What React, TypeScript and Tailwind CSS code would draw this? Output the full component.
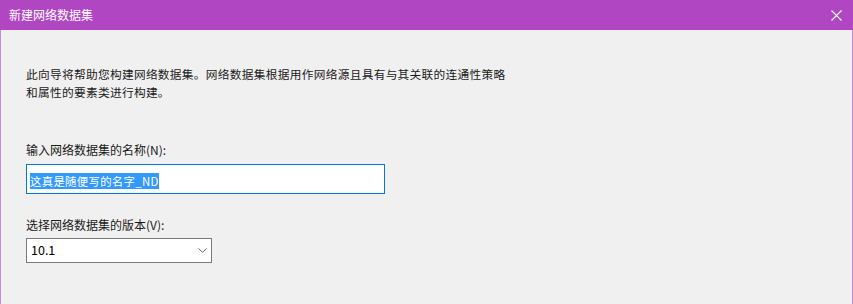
import { ChevronDown } from "lucide-react";

const font = "font-['Noto_Sans_CJK_SC','Noto_Sans',sans-serif]";

export default function App() {
	return (
		<div className={`flex h-[304px] w-[853px] flex-col overflow-hidden bg-[#f0f0f0] ${font}`}>
			{/* 标题栏 */}
			<div className="flex h-[30px] shrink-0 items-center justify-between bg-[#b046c2] pl-[9px] pr-[11px] text-white">
				<span className="text-[12px] leading-none">新建网络数据集</span>
				<svg width="11" height="11" viewBox="0 0 11 11" stroke="white" strokeWidth="1.1">
					<path d="M0.5 0.5 L10.5 10.5 M10.5 0.5 L0.5 10.5" />
				</svg>
			</div>

			<div className="flex flex-1 border-l border-r border-[#c48ad1] pr-[1px]">
				<div className="flex-1 pl-[25px]">
					{/* 说明 */}
					<p className="mt-[35px] text-[11.7px] leading-[18px] tracking-[0.3px] text-[#1a1a1a]">
						此向导将帮助您构建网络数据集。网络数据集根据用作网络源且具有与其关联的连通性策略
						<br />
						和属性的要素类进行构建。
					</p>

					{/* 名称 */}
					<label className="mt-[40px] block">
						<p className="text-[12px] leading-[18px] text-[#1a1a1a]">输入网络数据集的名称(N):</p>
						<div className="mt-[5px] h-[30px] w-[359px] border border-[#0078d7] bg-white pl-[3px] pt-[2px]">
							<span className="inline-block bg-[#3399ff] text-[11.4px] leading-[16px] tracking-[0.3px] text-white">
								这真是随便写的名字_ND
							</span>
						</div>
					</label>

					{/* 版本 */}
					<label className="mt-[22px] block">
						<p className="text-[12px] leading-[18px] text-[#1a1a1a]">选择网络数据集的版本(V):</p>
						<div className="mt-[4px] flex h-[25px] w-[186px] items-center justify-between border border-[#7a7a7a] bg-white pl-[4px] pr-[1px]">
							<span className="text-[12.5px] text-black">10.1</span>
							<ChevronDown className="h-[15px] w-[15px] text-[#444]" strokeWidth={1.3} />
						</div>
					</label>
				</div>
			</div>
		</div>
	);
}
